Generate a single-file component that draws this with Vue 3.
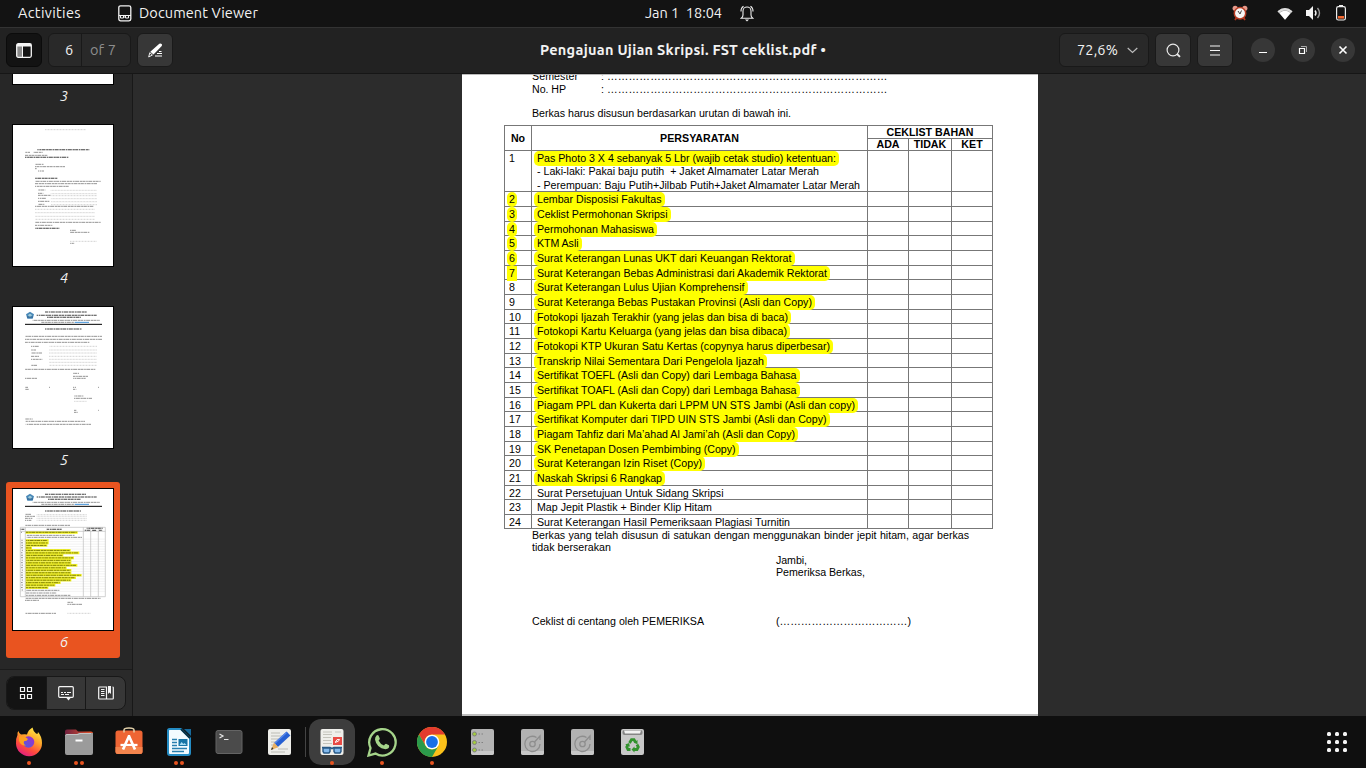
<script setup>
// Spreads the letters of an element so that its text takes the given width.
const vFit = {
  mounted(el, { value }) {
    const n = el.textContent.length
    el.style.letterSpacing = (value - el.getBoundingClientRect().width) / n + 'px'
  },
}

const tops = [150, 191, 206, 221, 235, 250, 265, 279, 294, 309, 323, 338, 353, 367, 382, 397, 411, 426, 441, 455, 470, 485, 499, 514, 528]
const items = [
  ['Pas Photo 3 X 4 sebanyak 5 Lbr (wajib cetak studio) ketentuan:', 299],
  ['Lembar Disposisi Fakultas', 124.5],
  ['Ceklist Permohonan Skripsi', 130.5],
  ['Permohonan Mahasiswa', 117],
  ['KTM Asli', 41.5],
  ['Surat Keterangan Lunas UKT dari Keuangan Rektorat', 254.5],
  ['Surat Keterangan Bebas Administrasi dari Akademik Rektorat', 290],
  ['Surat Keterangan Lulus Ujian Komprehensif', 207.5],
  ['Surat Keteranga Bebas Pustakan Provinsi (Asli dan Copy)', 275],
  ['Fotokopi Ijazah Terakhir (yang jelas dan bisa di baca)', 251],
  ['Fotokopi Kartu Keluarga (yang jelas dan bisa dibaca)', 250],
  ['Fotokopi KTP Ukuran Satu Kertas (copynya harus diperbesar)', 293],
  ['Transkrip Nilai Sementara Dari Pengelola Ijazah', 227],
  ['Sertifikat TOEFL (Asli dan Copy) dari Lembaga Bahasa', 259.5],
  ['Sertifikat TOAFL (Asli dan Copy) dari Lembaga Bahasa', 259.5],
  ['Piagam PPL dan Kukerta dari LPPM UN STS Jambi (Asli dan copy)', 318],
  ['Sertifikat Komputer dari TIPD UIN STS Jambi (Asli dan Copy)', 289.5],
  ['Piagam Tahfiz dari Ma’ahad Al Jami’ah (Asli dan Copy)', 258],
  ['SK Penetapan Dosen Pembimbing (Copy)', 198.5],
  ['Surat Keterangan Izin Riset (Copy)', 165],
  ['Naskah Skripsi 6 Rangkap', 125],
  ['Surat Persetujuan Untuk Sidang Skripsi', 186.5],
  ['Map Jepit Plastik + Binder Klip Hitam', 175],
  ['Surat Keterangan Hasil Pemeriksaan Plagiasi Turnitin', 253],
]
const rows = items.map(([text, w], i) => ({
  no: i + 1, text, w, h: tops[i + 1] - tops[i],
  mark: i < 21, markNo: i > 0 && i < 7,
}))

// Thumbnail text lines: x1, x2, y, optional style (b bold, d dotted)
const page4 = [
  [135, 258, 179, 'd'], [112, 268, 239, 'b'], [75, 90, 247], [100, 128, 247], [75, 142, 256], [75, 205, 262, 'b'],
  [105, 132, 283], [105, 195, 290], [105, 110, 296], [114, 132, 303], [105, 172, 325, 'b'],
  [105, 302, 334], [105, 292, 341], [105, 206, 349],
  [114, 136, 360], [114, 130, 370], [114, 152, 376], [114, 138, 385], [114, 148, 394], [114, 133, 403],
  [152, 291, 361, 'd'], [152, 291, 371, 'd'], [152, 291, 377, 'd'], [152, 291, 386, 'd'], [152, 291, 395, 'd'], [152, 291, 404, 'd'],
  [105, 280, 409], [105, 285, 418, 'd'], [105, 285, 428, 'd'], [105, 285, 439, 'd'], [105, 285, 448, 'd'],
  [105, 302, 457], [105, 157, 466], [105, 178, 475, 'b'], [210, 228, 481], [210, 268, 487], [210, 291, 514, 'd'], [210, 223, 520],
]
const page5 = [
  [135, 260, 66, 'b'], [110, 290, 76, 'b'], [140, 243, 82, 'b'], [98, 300, 91], [124, 222, 97], [135, 245, 117, 'b'],
  [75, 306, 139], [75, 306, 148], [75, 268, 157],
  [93, 116, 169], [93, 108, 180], [93, 127, 189], [93, 117, 199], [93, 127, 208], [93, 113, 226],
  [147, 291, 169, 'd'], [147, 291, 180, 'd'], [147, 291, 189, 'd'], [147, 291, 199, 'd'], [147, 291, 208, 'd'], [147, 291, 217, 'd'], [147, 291, 226, 'd'],
  [75, 286, 238], [219, 237, 250], [219, 264, 259], [219, 257, 265], [75, 111, 265],
  [75, 84, 292], [147, 150, 292], [219, 228, 292], [294, 297, 292], [75, 86, 298], [219, 229, 298],
  [222, 250, 318], [222, 276, 325], [222, 260, 334, 'd'], [222, 229, 361], [294, 297, 361], [222, 233, 367],
  [75, 98, 387], [77, 255, 394], [77, 273, 403],
]
const thumbMarks = [233, 146, 146, 142, 96, 212, 238, 190, 222, 214, 214, 232, 200, 214, 214, 245, 228, 214, 182, 166, 145]
const page6 = [
  [135, 258, 58, 'b'], [110, 290, 66, 'b'], [143, 243, 73, 'b'], [98, 300, 82], [124, 222, 88], [135, 243, 108, 'b'],
  [75, 93, 118], [75, 105, 124], [75, 97, 130], [75, 94, 136],
  [110, 260, 119, 'd'], [110, 260, 124, 'd'], [110, 260, 130, 'd'], [110, 260, 136, 'd'], [75, 210, 151],
  [62, 73, 163, 'b'], [140, 185, 163, 'b'], [260, 308, 160, 'b'], [254, 270, 166, 'b'], [275, 290, 166, 'b'], [297, 308, 166, 'b'],
  [63, 66, 172], [80, 225, 181], [80, 246, 187],
  ...thumbMarks.map((x, i) => [78, x - 3, i ? 189 + i * 7.45 : 172, 'm']),
  ...thumbMarks.map((_, i) => [63, 69, 196 + i * 7.45]),
  [78, 178, 346], [78, 170, 354], [78, 211, 361],
  [75, 302, 370], [75, 117, 376], [202, 219, 382], [202, 248, 388], [75, 168, 415], [202, 273, 415, 'd'],
]
const thumbs = [
  { n: 3, dy: 0, lines: [] },
  { n: 4, dy: -165, lines: page4 },
  { n: 5, dy: -51, lines: page5 },
  { n: 6, dy: -42, lines: page6 },
]
</script>

<template>
  <div class="desk">
    <div class="topbar">
      <div class="side left">
        <span v-fit="63">Activities</span>
        <svg class="docicon" width="14" height="17" viewBox="0 0 14 17" fill="none" stroke="#f2f2f2">
          <rect x=".8" y=".8" width="12" height="15" rx="1.8" stroke-width="1.3" />
          <path d="M1 10.5h12M2.5 11v2h3v-2M7.5 11v2h3v-2M5.5 12h2" />
        </svg>
        <span v-fit="119">Document Viewer</span>
      </div>
      <div class="clock">
        <span v-fit="77">Jan 1&nbsp; 18:04</span>
        <svg width="14" height="17" viewBox="0 0 14 17" fill="none" stroke="#eee" stroke-width="1.1">
          <path d="M1.200 13.300q1.800-1.200 1.800-3.300V6a4 4 0 0 1 8 0v4q0 2.100 1.800 3.300z" />
          <path d="M1 6.500Q.8 3 3.500 1.200M13 6.500Q13.200 3 10.500 1.200" />
          <path d="M5 14.600h4L7 16.600z" fill="#eee" stroke="none" />
        </svg>
      </div>
      <div class="side tray">
        <svg width="16" height="16" viewBox="0 0 16 16">
          <path d="M3 15l2-3M13 15l-2-3" stroke="#b5351c" stroke-width="1.8" />
          <circle cx="3.2" cy="3.3" r="2.6" fill="#e79a8b" /><circle cx="12.8" cy="3.3" r="2.6" fill="#e79a8b" />
          <circle cx="8" cy="8.3" r="5.7" fill="#f5f5f5" stroke="#b63b22" stroke-width="1.5" />
          <path d="M6 6l2 3 1.5-3.5" fill="none" stroke="#444" />
        </svg>
        <svg class="wifi" width="16" height="13" viewBox="0 0 16 13">
          <path d="M.5 4.2Q8-2.2 15.500 4.200L8 12.800z" fill="#777" /><path d="M.5 4.200Q8-2.200 15.500 4.200L14 5.900Q8 1 2 5.900z" fill="#ddd" />
          <path d="M2.300 6Q8 1.700 13.700 6L8 12.800z" fill="#fff" />
        </svg>
        <svg class="vol" width="16" height="14" viewBox="0 0 16 14">
          <path d="M0 4h3l4-4v14L3 10H0z" fill="#f5f5f5" />
          <path d="M9 4.500q2 2.500 0 5" fill="none" stroke="#f5f5f5" stroke-width="1.400" /><path d="M11.500 2q4 5 0 10" fill="none" stroke="#999" stroke-width="1.400" />
        </svg>
        <svg class="bat" width="12" height="16" viewBox="0 0 12 16">
          <path d="M4 0h4v2H4z" fill="#eee" /><rect x="1.600" y="1.600" width="8.800" height="13.400" rx="1.800" fill="none" stroke="#eee" stroke-width="1.200" />
          <path d="M3 11h6v2.600H3z" fill="#f1672f" />
        </svg>
      </div>
    </div>

    <div class="header">
      <div class="tools">
        <div class="btn dark">
          <svg width="16" height="15" viewBox="0 0 16 15"><path d="M1 3h5.500v11H1z" fill="#8a8a8a" /><path d="M1 1h14v2.500H1z" fill="#f5f5f5" /><rect x=".7" y=".7" width="14.600" height="13.600" rx="1.500" fill="none" stroke="#f5f5f5" stroke-width="1.300" /><path d="M6.500 3v11" stroke="#f5f5f5" /></svg>
        </div>
        <div class="pager"><span class="cur">6</span><span class="of"><span v-fit="26">of 7</span></span></div>
        <div class="btn">
          <svg width="15" height="15" viewBox="0 0 15 15"><path d="M11.300.8q1.300-.9 2.300.2t-.1 2.200L5.500 11.500 2.300 8.800z" fill="#fff" /><path d="M1.800 9.700 4.400 12 .7 14z" fill="none" stroke="#eee" /><path d="M11 8.500h2.500M9 10.500h5M7 13h7" stroke="#fff" stroke-width="1.200" /></svg>
        </div>
      </div>
      <div class="title"><span v-fit="286">Pengajuan Ujian Skripsi. FST ceklist.pdf •</span></div>
      <div class="tools right">
        <div class="zoom"><span v-fit="41">72,6%</span><svg width="11" height="7" viewBox="0 0 11 7"><path d="M.7 1l4.800 4.500L10.300 1" fill="none" stroke="#bbb" stroke-width="1.200" /></svg></div>
        <div class="btn"><svg width="15" height="15" viewBox="0 0 15 15" fill="none" stroke="#e8e8e8" stroke-width="1.200"><circle cx="7" cy="7" r="5.900" /><path d="M11 11l3 2.800" stroke-width="1.800" /></svg></div>
        <div class="btn"><svg width="10" height="11" viewBox="0 0 10 11"><path d="M0 1h10M0 5.500h10M0 10h10" stroke="#f5f5f5" stroke-width="1.200" /></svg></div>
        <div class="wins">
          <div><svg width="10" height="10" viewBox="0 0 10 10"><path d="M1 7.500h8" stroke="#fff" /></svg></div>
          <div><svg width="10" height="10" viewBox="0 0 10 10" fill="none"><path d="M3 1.500h5.500V7" stroke="#aaa" /><path d="M1.500 3.500h5v5h-5z" stroke="#fff" stroke-width="1.200" /></svg></div>
          <div><svg width="10" height="10" viewBox="0 0 10 10"><path d="M1.500 1.500l7 7m0-7l-7 7" stroke="#fff" stroke-width="1.600" /></svg></div>
        </div>
      </div>
    </div>

    <div class="body">
      <div class="sidebar">
        <div class="thumbs">
          <div v-for="t in thumbs" :key="t.n" class="thumb" :class="{ sel: t.n === 6 }">
            <div class="paper">
              <svg width="100" height="141" viewBox="0 0 300 423">
                <g :transform="`translate(-39 ${t.dy})`">
                  <template v-if="t.n === 6">
                    <path v-for="(x, i) in thumbMarks" :key="i" :d="`M76 ${i ? 189 + i * 7.45 : 172}H${x}`" stroke="#f7f717" stroke-width="8" />
                    <path v-for="i in 22" :key="'r' + i" :d="`M61 ${185 + i * 7.45}H316`" stroke="#ccc" stroke-opacity=".7" />
                    <path d="M61 157H316V365H61zM61 169H316M76 157V365M250 157V365M272 163V365M295 163V365" fill="none" stroke="#bbb" stroke-width="2" />
                  </template>
                  <template v-if="t.n > 4">
                    <g :transform="`translate(90 ${t.n === 5 ? 76 : 67})`">
                      <path d="M0-11 12-3 8 10H-8L-12-3z" fill="#4887b7" /><circle r="5" fill="#9cc9d9" /><path d="M-9 5h18" stroke="#234f80" stroke-width="2" />
                    </g>
                    <path :d="`M75 ${t.n === 5 ? 103 : 94}H306`" stroke="#000" stroke-width="3" />
                  </template>
                  <path v-for="(l, i) in t.lines" :key="'t' + i" :d="`M${l[0]} ${l[2]}H${l[1]}`" class="ln" :class="l[3]" :stroke-dashoffset="i * 5" />
                  <path v-if="t.n > 4" :d="`M224 ${t.n === 5 ? 97 : 88}H267`" stroke="#3f91d8" stroke-width="3" />
                </g>
              </svg>
            </div>
            <span class="num">{{ t.n }}</span>
          </div>
        </div>
        <div class="modes">
          <div class="seg">
            <div class="on"><svg width="14" height="14" viewBox="0 0 14 14" fill="none" stroke="#f5f5f5" stroke-width="1.200"><path d="M1.500 1.500h4v4h-4zM8.500 1.500h4v4h-4zM1.500 8.500h4v4h-4zM8.500 8.500h4v4h-4z" /></svg></div>
            <div><svg width="16" height="15" viewBox="0 0 16 15"><rect x=".7" y=".7" width="14.600" height="10.600" rx="1" fill="none" stroke="#f5f5f5" stroke-width="1.200" /><path d="M8 11.500h5l-2.500 3z" fill="#f5f5f5" /><path d="M3 6.500h2m1 0h2m1 0h4M3 8.500h3m1 0h4" stroke="#f5f5f5" /></svg></div>
            <div><svg width="16" height="14" viewBox="0 0 16 14"><path d="M8.500 13V1H1.500q-.8 0-.8.8v10.400q0 .8.800.8h13q.8 0 .8-.8V1.800q0-.8-.8-.8" fill="none" stroke="#f5f5f5" stroke-width="1.200" /><path d="M10 0h3v8l-1.500-1.500L10 8z" fill="#f5f5f5" /><path d="M3 3.500h3.500M3 5.500h3.500M3 7.500h3.500M3 9.500h3.500" stroke="#f5f5f5" /></svg></div>
          </div>
        </div>
      </div>

      <div class="view">
        <div class="page">
          <div class="line"><span class="lab"><span v-fit="46">Semester</span></span><span class="col">:</span><span v-fit="280.5">……………………………………………………………………</span></div>
          <div class="line"><span class="lab"><span v-fit="34">No. HP</span></span><span class="col">:</span><span v-fit="280.5">……………………………………………………………………</span></div>
          <div class="line intro"><span v-fit="259">Berkas harus disusun berdasarkan urutan di bawah ini.</span></div>

          <div class="table">
            <div class="row head">
              <div><span>No</span></div><div><span v-fit="79">PERSYARATAN</span></div>
              <div class="group">
                <div class="gt"><span v-fit="87">CEKLIST BAHAN</span></div>
                <div class="gs"><div>ADA</div><div>TIDAK</div><div>KET</div></div>
              </div>
            </div>
            <div v-for="r in rows" :key="r.no" class="row" :style="{ height: r.h + 'px' }">
              <div class="n"><span :class="{ mark: r.markNo, square: r.no === 7 }">{{ r.no }}</span></div>
              <div class="t">
                <span class="tx" :class="{ mark: r.mark }"><span v-fit="r.w">{{ r.text }}</span></span>
                <template v-if="r.no === 1">
                  <span class="tx sub"><span v-fit="282">- Laki-laki: Pakai baju putih&nbsp; + Jaket Almamater Latar Merah</span></span>
                  <span class="tx sub two"><span v-fit="323">- Perempuan: Baju Putih+Jilbab Putih+Jaket Almamater Latar Merah</span></span>
                </template>
              </div>
              <div></div><div></div><div></div>
            </div>
          </div>

          <div class="after">
            <div class="just">Berkas yang telah disusun di satukan dengan menggunakan binder jepit hitam, agar berkas</div>
            <div><span v-fit="79">tidak berserakan</span></div>
            <div class="sign"><span v-fit="31">Jambi,</span></div>
            <div class="sign"><span v-fit="89">Pemeriksa Berkas,</span></div>
            <div class="check"><span class="who"><span v-fit="172">Ceklist di centang oleh PEMERIKSA</span></span><span v-fit="135">(………………………………)</span></div>
          </div>
        </div>
      </div>
    </div>

    <div class="dock">
      <div class="app">
        <svg width="30" height="30" viewBox="0 0 30 30">
          <defs>
            <linearGradient id="ff" x1=".8" y1="0" x2=".3" y2="1"><stop offset="0" stop-color="#fff04a" /><stop offset=".4" stop-color="#ffa52a" /><stop offset=".72" stop-color="#ff4a3d" /><stop offset="1" stop-color="#e01c85" /></linearGradient>
            <linearGradient id="ffp" x1="0" y1="1" x2="1" y2="0"><stop offset="0" stop-color="#4c5fe0" /><stop offset="1" stop-color="#a52cc8" /></linearGradient>
          </defs>
          <path d="M3.500 8Q3 5.500 4.500 4q.5 2.500 2.500 3.500 4-.5 6 0 1-4.500 5.500-7 .5 3.500 3.500 6l1.500.5.5-2q4 4.500 4 11A13 13 0 0 1 2 16.500q-.5-4.500 1.500-8.500z" fill="url(#ff)" />
          <circle cx="14.500" cy="15" r="5.800" fill="url(#ffp)" />
          <path d="M5 9.500q6-1 9 2.500-1 2.300-4 2.300-1 3 2 4.200-5.500.5-7-5z" fill="#ffa11e" />
        </svg>
        <i class="dots"><b></b></i>
      </div>
      <div class="app">
        <svg width="30" height="30" viewBox="0 0 30 30">
          <defs><linearGradient id="fo"><stop offset="0" stop-color="#70213f" /><stop offset="1" stop-color="#e8552a" /></linearGradient></defs>
          <path d="M1 4.500q0-2 2-2h9l2 2h13q2 0 2 2V16H1z" fill="url(#fo)" /><path d="M3 7h10l2-1h14v20q0 2-2 2H3q-2 0-2-2V9q0-2 2-2z" fill="#9b9b9b" /><path d="M1.500 8.500Q2 7.500 3 7.500h11l2-1h11" stroke="#c4c4c4" fill="none" /><path d="M11.500 13.500h7" stroke="#fff" stroke-width="2" />
        </svg>
        <i class="dots"><b></b><b></b></i>
      </div>
      <div class="app">
        <svg width="30" height="30" viewBox="0 0 30 30">
          <rect x="1.500" y="3.500" width="27" height="23.500" rx="2.500" fill="#ee6534" /><path d="M1.500 20h27v4.500q0 2.500-2.500 2.500H4q-2.500 0-2.500-2.500z" fill="#f4844d" /><path d="M10 5.500V3q0-2 5-2t5 2v2.500" fill="none" stroke="#e3d1aa" stroke-width="1.500" />
          <path d="M15.300 8.500 9 22.500M14.700 8.500l6.300 14" stroke="#fff" stroke-width="2.700" /><path d="M6.500 18h17" stroke="#fff" stroke-width="2.300" />
        </svg>
      </div>
      <div class="app">
        <svg width="30" height="30" viewBox="0 0 30 30">
          <path d="M5.500 2H17l9 9v15q0 2-2 2H6q-2 0-2-2V3.500Q4 2 5.500 2z" fill="#f2fbff" stroke="#248cc4" stroke-width="2" /><path d="M20 2h7v7z" fill="#176a9c" /><path d="M17 2l9 9" stroke="#0a3043" stroke-width="2" />
          <path d="M8 12.500h5M8 15.500h5M8 18.500h5M8 21.500h15M8 24.500h12" stroke="#287fae" stroke-width="1.500" /><path d="M14.500 12h9v7h-9z" fill="#1674a6" /><path d="M15.500 18l2-3 2 2 1-1 2 2z" fill="#a6dcf2" />
        </svg>
        <i class="dots"><b></b><b></b></i>
      </div>
      <div class="app">
        <svg width="30" height="30" viewBox="0 0 30 30"><rect x="2" y="3.500" width="26" height="23" rx="2" fill="#4b4b4b" stroke="#646464" /><path d="M5.500 7l3.500 2-3.500 2M10 12.500h4.500" fill="none" stroke="#e5e5e5" stroke-width="1.200" /></svg>
      </div>
      <div class="app shift">
        <svg width="30" height="30" viewBox="0 0 30 30"><rect x="4" y="2" width="23" height="26" rx="2" fill="#eeeeea" /><path d="M7 6h9M7 9h13M7 12h10M7 15h7M7 18h7M14 22h10M7 25h14" stroke="#bcbcb5" /><path d="M24.500 6.500 12 18" stroke="#2760d2" stroke-width="5.500" /><path d="M22.500 5.500 10.500 16.500" stroke="#5787e9" stroke-width="1.500" /><path d="M10 15.500l4.300 4.700L7 23z" fill="#e8b062" /><path d="M7 23l1-3 1.500 2z" fill="#333" /></svg>
      </div>
      <div class="sep"></div>
      <div class="app active">
        <svg width="30" height="30" viewBox="0 0 30 30"><rect x="3.500" y="2" width="23" height="26" rx="2" fill="#efefeb" /><path d="M6 5h9M6 7.500h9M6 10.500h8M6 13.500h8M6 16.500h9M18 5h6" stroke="#c4c4bc" /><path d="M16 10h9v8h-9z" fill="#e84b45" /><path d="M18 15.500q4.500-1 4.500-3-3-1-4 2.500" stroke="#fff" fill="none" /><path d="M5 20.500h8l2 1 2-1h8" fill="none" stroke="#285987" stroke-width="1.600" /><path d="M6 21h7v3.500L12 26H7l-1-1.500zM17 21h7v3.500L23 26h-5l-1-1.500z" fill="#82b9ec" stroke="#285987" stroke-width="1.400" /></svg>
        <i class="dots"><b></b></i>
      </div>
      <div class="app">
        <svg width="30" height="30" viewBox="0 0 30 30"><path d="M1.500 28.500l2-7.500a13.200 13.200 0 1 1 5 5.600z" fill="#111" stroke="#a5d48a" stroke-width="2.300" /><path d="M9.500 8.500q1-1 2 0l1.300 3q0 1-1.200 2 1.500 3.500 5.400 5 1-1.500 2-1.700l3 1.500q1 3.500-3.500 4Q9.500 21 8 12.500q0-2.500 1.500-4z" fill="#a5d48a" /></svg>
        <i class="dots"><b></b></i>
      </div>
      <div class="app">
        <svg width="30" height="30" viewBox="0 0 30 30"><circle cx="15" cy="15" r="15" fill="#fbc11a" /><path d="M2 7.500A15 15 0 0 1 28 7.500H15a7.500 7.500 0 0 0-6.500 11.200z" fill="#e33b2e" /><path d="M2 7.500A15 15 0 0 0 15 30l6.500-11.200a7.500 7.500 0 0 1-13 0z" fill="#2b9a4b" /><circle cx="15" cy="15" r="7.300" fill="#fff" /><circle cx="15" cy="15" r="5.900" fill="#1a6fe6" /></svg>
        <i class="dots"><b></b></i>
      </div>
      <div class="app shift">
        <svg width="30" height="30" viewBox="0 0 30 30"><rect x="4" y="2" width="23" height="26" rx="2" fill="#b4b4b4" /><path d="M4 24h23v2q0 2-2 2H6q-2 0-2-2z" fill="#c8c8c8" /><g fill="#a3cc3c" stroke="#808080"><circle cx="7.500" cy="7" r="2" /><circle cx="7.500" cy="15.500" r="2" /><circle cx="7.500" cy="23" r="2" /></g><path d="M11.500 7H13m1.500 0H16M11.500 15.500H13m1.500 0H16M11.500 23H13m1.500 0H16" stroke="#808080" stroke-width="1.200" /></svg>
      </div>
      <div v-for="d in 2" :key="d" class="app shift">
        <svg width="30" height="30" viewBox="0 0 30 30"><rect x="4" y="2" width="23" height="26" rx="2" fill="#b2b2b2" /><path d="M4 24h23v2q0 2-2 2H6q-2 0-2-2z" fill="#c8c8c8" /><g fill="none" stroke="#8e8e8e" stroke-width="1.300"><path d="M19.500 10.500a7.600 7.600 0 1 0 3.500 6.500M17.500 15l5.500-6v4" /><circle cx="15.500" cy="17" r="2.700" /></g></svg>
      </div>
      <div class="app shift">
        <svg width="30" height="30" viewBox="0 0 30 30"><rect x="4" y="2" width="23" height="26" rx="2" fill="#c8c8c8" /><rect x="5.500" y="3" width="20" height="5" rx="2" fill="#858585" /><path d="M7 3.500h17l-1 3H8z" fill="#f2f2f2" /><g fill="none" stroke="#32922d" stroke-width="2.800"><path d="M12.500 16l2-3.300H17l1.500 2.500M20 17.500l1.300 2.500-1.300 2.500h-3M13.500 22.500H11L9.800 20l1.200-2.300" /></g><path d="M20.500 13v4.300l-3.700-1.500zM17.500 19.500v6l-3-3zM8.200 17.500l4-1.500.6 3.700z" fill="#32922d" /></svg>
      </div>
      <div class="grid"><b v-for="k in 9" :key="k"></b></div>
    </div>
  </div>
</template>

<style>
body { margin: 0; overflow: hidden; background: #0f0f0f; }
</style>

<style scoped>
.desk { width: 1366px; height: 768px; display: flex; flex-direction: column; overflow: hidden; font-family: Ubuntu, "Noto Sans", sans-serif; font-size: 14.5px; color: #f2f2f2; line-height: 20px; }
.desk * { box-sizing: border-box; }
span { white-space: nowrap; }
svg { display: block; flex: none; }
.topbar { height: 27px; background: #131313; display: grid; grid-template-columns: 1fr auto 1fr; align-items: center; padding-bottom: 1px; flex: none; }
.side { display: flex; align-items: center; }
.left { padding-left: 18px; }
.docicon { margin: 0 7px 0 37px; }
.clock { display: flex; align-items: center; gap: 18px; width: 109px; margin-left: 33px; }
.tray { justify-content: flex-end; padding-right: 19px; }
.wifi { margin-left: 29px; }
.vol { margin-left: 13px; }
.bat { margin-left: 13px; }
.header { height: 47px; flex: none; background: #222; border-top: 1px solid #333; border-bottom: 1px solid #161616; display: grid; grid-template-columns: 1fr auto 1fr; padding: 5px 11px 0 6px; }
.tools { display: flex; gap: 6px; height: 34px; }
.btn { width: 36px; height: 34px; border: 1px solid #1a1a1a; border-radius: 6px; background: #373737; display: flex; align-items: center; justify-content: center; }
.btn.dark { background: #131313; border-color: #0b0b0b; }
.pager { width: 83px; border: 1px solid #191919; border-radius: 6px; background: #292929; display: flex; line-height: 32px; }
.cur { width: 33px; padding-left: 16px; border-right: 1px solid #191919; }
.of { padding-left: 8px; color: #8d8d8d; }
.title { font-weight: 700; line-height: 34px; padding-left: 5px; }
.right { justify-content: flex-end; }
.zoom { width: 90px; border: 1px solid #191919; border-radius: 6px; background: #292929; display: flex; align-items: center; padding: 0 10px 0 17px; justify-content: space-between; }
.wins { display: flex; gap: 16px; margin-left: 12px; align-items: center; }
.wins div { width: 24px; height: 24px; border-radius: 50%; background: #373737; display: flex; align-items: center; justify-content: center; }
.body { height: 642px; display: flex; flex: none; }
.sidebar { width: 133px; border-right: 1px solid #181818; background: #272727; display: flex; flex-direction: column; flex: none; }
.thumbs { height: 595px; overflow: hidden; padding-left: 6px; }
.thumb { width: 114px; height: 176px; margin-bottom: 6px; padding: 6px; border-radius: 3px; text-align: center; }
.thumb:first-child { margin-top: -138px; }
.thumb.sel { background: #e95420; }
.paper { width: 102px; height: 143px; background: #fff; border: 1px solid #000; }
.num { display: block; font-style: italic; line-height: 22px; padding-left: 2px; }
.ln { stroke: #8c8c8c; stroke-width: 2.800; stroke-dasharray: 9 2 5 1.500 12 2 7 1; fill: none; }
.ln.b { stroke: #444; stroke-width: 3.200; }
.ln.d { stroke: #b5b5b5; stroke-width: 1.800; stroke-dasharray: 3 1.500; }
.ln.m { stroke: #77770c; }
.modes { flex: 1; border-top: 1px solid #1b1b1b; background: #2a2a2a; padding: 6px 6px 0; }
.seg { display: flex; width: 120px; height: 34px; border: 1px solid #181818; border-radius: 8px; overflow: hidden; background: #373737; }
.seg div { flex: 1; display: flex; align-items: center; justify-content: center; border-right: 1px solid #181818; }
.seg div:last-child { border-right: 0; }
.seg .on { background: #131313; }
.view { flex: 1; background: #2c2c2c; display: flex; padding-left: 329px; overflow: hidden; }
.page { width: 576px; height: 642px; background: #fff; border-top: 1px solid #bbb; border-bottom: 2px solid #bdbdbd; color: #000; font-family: Arial, "Liberation Sans", sans-serif; font-size: 10.65px; line-height: 12px; overflow: hidden; }
.line { display: flex; padding-left: 70px; height: 12px; }
.line:first-child { margin-top: -5px; margin-bottom: 1px; }
.line.intro { margin-top: 12px; }
.lab { width: 69px; }
.col { width: 6px; }
.table { margin: 6px 0 0 42px; width: 489px; border-right: 1px solid #777; border-bottom: 1px solid #777; }
.row { display: grid; grid-template-columns: 27px 336px 41px 43px 41px; border-top: 1px solid #777; }
.row > div { border-left: 1px solid #777; }
.head { height: 25px; font-weight: 700; text-align: center; line-height: 25px; }
.group { grid-column: 3 / 6; }
.gt { height: 13px; line-height: 13px; border-bottom: 1px solid #777; }
.gs { display: grid; grid-template-columns: 40px 43px 41px; line-height: 11px; }
.gs > div + div { border-left: 1px solid #777; }
.gs > div { height: 11px; }
.n { padding-left: 2px; }
.n span, .tx { display: block; width: max-content; height: 14px; line-height: 14px; padding: 0 3px 0 2px; }
.n span { padding: 0 2px; }
.t { padding-left: 2px; }
.tx { padding-left: 3px; }
.n .mark, .t .mark { background: #ff0; border-radius: 5px; height: 15px; margin-bottom: -1px; }
.n .square { border-radius: 0; }
.t .sub { height: 13px; line-height: 13px; }
.t .sub.two { line-height: 14px; }
.after { padding-left: 70px; }
.after > div { height: 12.400px; }
.just { width: 437px; text-align-last: justify; white-space: nowrap; }
.sign { padding-left: 244px; }
.after .check { display: flex; margin-top: 36px; }
.who { width: 244px; }
.dock { height: 52px; background: #0f0f0f; display: flex; padding: 3px 17px 3px 6px; gap: 4px; flex: none; align-items: center; }
.app { width: 46px; height: 46px; border-radius: 12px; position: relative; display: flex; justify-content: center; padding-top: 8px; }
.shift svg { margin-left: -1px; }
.active { background: #3d3d3d; }
.dots { position: absolute; left: 0; right: 0; bottom: 0; display: flex; justify-content: center; gap: 2px; }
.dots b { width: 4px; height: 4px; border-radius: 50%; background: #e95420; }
.sep { width: 1px; height: 30px; background: #444; margin: 0 -1px 0 -1px; }
.grid { margin-left: auto; display: grid; grid-template-columns: repeat(3, 4px); gap: 4px; margin-right: 2px; }
.grid b { width: 4px; height: 4px; border-radius: 1.500px; background: #f5f5f5; }
</style>
